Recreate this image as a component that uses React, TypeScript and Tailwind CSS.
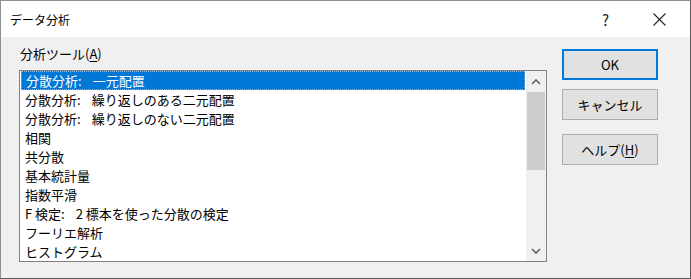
import React from "react";

const items = [
  "分散分析: 一元配置",
  "分散分析: 繰り返しのある二元配置",
  "分散分析: 繰り返しのない二元配置",
  "相関",
  "共分散",
  "基本統計量",
  "指数平滑",
  "F 検定: 2 標本を使った分散の検定",
  "フーリエ解析",
  "ヒストグラム",
];

// Meiryo UI の ": " は幅があるので、コロンの後ろに余白を足す
function ItemText({ text }: { text: string }) {
  const parts = text.split(": ");
  if (parts.length === 1) return <>{text}</>;
  return (
    <>
      {parts[0]}
      <span className="pr-[11px]">:</span> {parts[1]}
    </>
  );
}

function Chevron({ up }: { up?: boolean }) {
  return (
    <svg width="10" height="6" viewBox="0 0 10 6" className="block">
      <path
        d={up ? "M1 5 L5 1 L9 5" : "M1 1 L5 5 L9 1"}
        fill="none"
        stroke="#606060"
        strokeWidth="1.6"
      />
    </svg>
  );
}

function DialogButton({
  children,
  primary,
}: {
  children: React.ReactNode;
  primary?: boolean;
}) {
  return (
    <button
      className={`w-[96px] h-[31px] bg-[#e1e1e1] text-[13px] text-black flex items-center justify-center ${
        primary ? "border-2 border-[#0078d7]" : "border border-[#adadad]"
      }`}
    >
      {children}
    </button>
  );
}

export default function App() {
  return (
    <div
      className="w-[691px] h-[279px] bg-[#f0f0f0] flex flex-col border-l border-t border-[#8f8f8f] border-r border-b border-r-[#5a5a5a] border-b-[#5a5a5a]"
      style={{ fontFamily: '"Noto Sans CJK JP", "Noto Sans", sans-serif' }}
    >
      {/* タイトルバー */}
      <div className="h-[36px] bg-white flex items-center shrink-0">
        <span className="pl-[9px] pt-[2px] text-[12px] text-black">データ分析</span>
        <span className="ml-auto mr-[44px] pt-[2px] text-[15px] text-[#222]">?</span>
        <svg width="13" height="13" viewBox="0 0 13 13" className="mr-[24px]">
          <path d="M0.5 0.5 L12.5 12.5 M12.5 0.5 L0.5 12.5" stroke="#222" strokeWidth="1.1" />
        </svg>
      </div>

      <div className="flex flex-1 pl-[18px]">
        {/* 左側: リスト */}
        <div className="w-[528px] flex flex-col pt-[9px]">
          <div className="h-[16px] leading-[16px] text-[13px] text-black pl-[1px]">
            分析ツール(<span className="underline underline-offset-2">A</span>)
          </div>
          <div className="mt-[8px] h-[192px] border border-[#828282] bg-white flex">
            <div className="flex-1 flex flex-col">
              {items.map((t, i) => (
                <div key={t} className="h-[19px] flex">
                  <div
                    className={`flex-1 ml-[1px] mr-[1px] flex items-center pl-[4px] text-[13px] leading-[19px] whitespace-nowrap ${
                      i === 0
                        ? "bg-[#0078d7] text-white border border-dotted border-[#7fb8e8] pl-[3px]"
                        : "text-black"
                    }`}
                  >
                    <ItemText text={t} />
                  </div>
                </div>
              ))}
            </div>
            {/* スクロールバー */}
            <div className="w-[20px] bg-[#f0f0f0] flex flex-col">
              <div className="h-[21px] flex items-center justify-center">
                <Chevron up />
              </div>
              <div className="h-[78px] bg-[#cdcdcd] mx-[1px]" />
              <div className="flex-1" />
              <div className="h-[21px] flex items-center justify-center">
                <Chevron />
              </div>
            </div>
          </div>
        </div>

        {/* 右側: ボタン */}
        <div className="ml-[15px] pt-[12px] flex flex-col gap-[9px]">
          <DialogButton primary>OK</DialogButton>
          <DialogButton>キャンセル</DialogButton>
          <div className="mt-[5px]">
            <DialogButton>
              ヘルプ(<span className="underline underline-offset-2">H</span>)
            </DialogButton>
          </div>
        </div>
      </div>
    </div>
  );
}
